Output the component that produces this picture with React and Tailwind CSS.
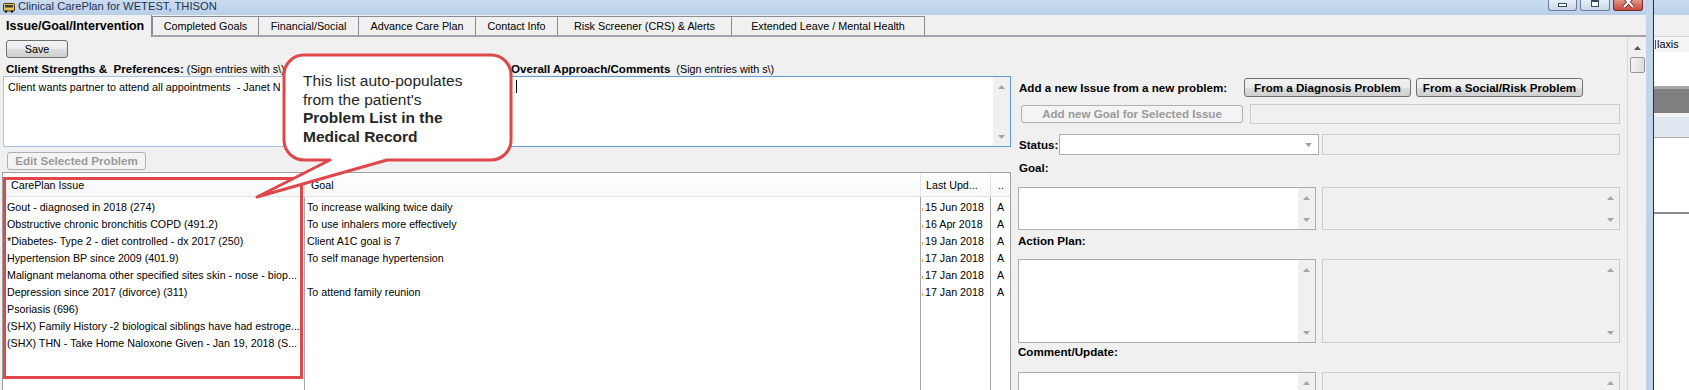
import React from "react";

const Up = ({ c = "#a5a5a5" }) => (
  <svg width="7" height="4" viewBox="0 0 7 4" className="block">
    <path d="M3.5 0L7 4H0Z" fill={c} />
  </svg>
);
const Down = ({ c = "#a5a5a5" }) => (
  <svg width="7" height="4" viewBox="0 0 7 4" className="block">
    <path d="M0 0H7L3.5 4Z" fill={c} />
  </svg>
);

function ScrollBox({ className = "", disabled = false, children }) {
  return (
    <div
      className={`flex overflow-hidden border ${
        disabled ? "bg-[#f0f0f0] border-[#cccccc]" : "bg-white border-[#abadb3]"
      } ${className}`}
    >
      <div className="flex-1 min-w-0">{children}</div>
      <div className="w-[17px] shrink-0 flex flex-col items-center justify-between pt-[8px] pb-[7px] bg-[#f0f0f0]">
        <Up />
        <Down />
      </div>
    </div>
  );
}

const BTN =
  "bg-[linear-gradient(to_bottom,#f2f2f2_0%,#ebebeb_50%,#dddddd_50%,#cfcfcf_100%)] border border-[#707070] rounded-[3px] flex items-center justify-center whitespace-nowrap";
const BTN_DIS =
  "bg-[#f4f4f4] border border-[#adb2b5] rounded-[3px] flex items-center justify-center whitespace-nowrap text-[#9a9a9a] font-bold text-[11.6px]";

const issues = [
  "Gout - diagnosed in 2018 (274)",
  "Obstructive chronic bronchitis COPD (491.2)",
  "*Diabetes- Type 2 - diet controlled - dx 2017 (250)",
  "Hypertension BP since 2009 (401.9)",
  "Malignant melanoma other specified sites skin - nose - biop...",
  "Depression since 2017 (divorce) (311)",
  "Psoriasis (696)",
  "(SHX) Family History -2 biological siblings have had estroge...",
  "(SHX) THN - Take Home Naloxone Given - Jan 19, 2018 (S...",
];
const goals = [
  "To increase walking twice daily",
  "To use inhalers more effectively",
  "Client A1C goal is 7",
  "To self manage hypertension",
  "",
  "To attend family reunion",
];
const dates = ["15 Jun 2018", "16 Apr 2018", "19 Jan 2018", "17 Jan 2018", "17 Jan 2018", "17 Jan 2018"];

const ROW = "h-[17px] leading-[17px] whitespace-nowrap overflow-hidden text-[10.7px]";
const HEAD =
  "h-[24px] leading-[24px] border-b border-r border-[#e3e3e3] bg-[linear-gradient(to_bottom,#ffffff,#f7f8fa)] whitespace-nowrap overflow-hidden text-[10.7px]";

function TitleBar() {
  return (
    <div className="h-[15px] flex items-start bg-[linear-gradient(to_bottom,#cbdcef,#b9cfe8)]">
      <svg width="12" height="12" viewBox="0 0 12 12" className="ml-[3px] mt-px shrink-0">
        <rect x="0.5" y="2.5" width="11" height="7.5" rx="1" fill="#e3c25a" stroke="#4a3b14" />
        <rect x="2" y="4" width="8" height="2.5" fill="#3b3b3b" />
        <circle cx="3" cy="10.5" r="1.3" fill="#222" />
        <circle cx="9" cy="10.5" r="1.3" fill="#222" />
      </svg>
      <span className="ml-[3px] text-[11.2px] leading-[12px] text-[#1e3250] whitespace-nowrap">
        Clinical CarePlan for WETEST, THISON
      </span>
      <div className="flex-1" />
      <div className="flex items-start gap-[3px] mr-[3px]">
        <div className="w-[29px] h-[11px] border border-t-0 border-[#6c7d96] rounded-b-[3px] bg-[linear-gradient(to_bottom,#e8eff8,#c8d7ec)] flex justify-center">
          <div className="mt-[3px] w-[9px] h-[4px] bg-white border border-[#3a4a60]" />
        </div>
        <div className="w-[30px] h-[11px] border border-t-0 border-[#6c7d96] rounded-b-[3px] bg-[linear-gradient(to_bottom,#e8eff8,#c8d7ec)] flex justify-center">
          <div className="w-[8px] h-[7px] bg-white border border-[#3a4a60] border-t-2" />
        </div>
        <div className="w-[30px] h-[11px] border border-t-0 border-[#7d2c24] rounded-b-[3px] bg-[linear-gradient(to_bottom,#e3958a,#c5493d)] flex justify-center">
          <svg width="13" height="8" viewBox="0 0 13 8">
            <path d="M2 -3L11 7M11 -3L2 7" stroke="#5a1a14" strokeWidth="3.6" />
            <path d="M2 -3L11 7M11 -3L2 7" stroke="#ffffff" strokeWidth="2.2" />
          </svg>
        </div>
      </div>
    </div>
  );
}

function Tabs() {
  const tabs = [
    ["Completed Goals", "w-[106px]"],
    ["Financial/Social", "w-[100px]"],
    ["Advance Care Plan", "w-[117px]"],
    ["Contact Info", "w-[82px]"],
    ["Risk Screener (CRS) & Alerts", "w-[174px]"],
    ["Extended Leave / Mental Health", "w-[194px] border-r"],
  ];
  return (
    <div className="h-[22px] flex">
      <div className="w-[152px] h-[22px] border-r border-[#898c95] flex items-center pl-[6px] font-bold text-[12.5px] whitespace-nowrap">
        Issue/Goal/Intervention
      </div>
      <div className="flex-1 h-[22px] flex items-end border-b-2 border-[#a0a3a8]">
        {tabs.map(([t, w]) => (
          <div
            key={t}
            className={`${w} h-[19px] border-l border-t border-[#898c95] flex items-center justify-center text-[10.8px] whitespace-nowrap`}
          >
            {t}
          </div>
        ))}
      </div>
    </div>
  );
}

function LeftPart() {
  return (
    <div className="w-[1011px] flex flex-col">
      <div className="h-[21px] pt-[3px] pl-[6px]">
        <div className={`${BTN} w-[62px] h-[18px] text-[10.8px]`}>Save</div>
      </div>
      <div className="h-[18px] pt-[2px] flex items-center whitespace-nowrap">
        <div className="w-[510px] pl-[6px] overflow-hidden">
          <span className="font-bold text-[11.6px]">Client Strengths &amp;&nbsp; Preferences:</span>
          <span className="text-[10.8px]"> (Sign entries with s\)</span>
        </div>
        <div className="pl-px">
          <span className="font-bold text-[11.6px]">Overall Approach/Comments</span>
          <span className="text-[10.8px]">&nbsp; (Sign entries with s\)</span>
        </div>
      </div>
      <div className="h-[71px] flex">
        <div className="ml-[3px] w-[506px] h-[71px] bg-white border border-[#a7c3e3] pl-[4px] pt-[3px] overflow-hidden">
          <div className="text-[10.8px] leading-[14px] whitespace-pre">
            Client wants partner to attend all appointments  - Janet N
          </div>
        </div>
        <ScrollBox className="ml-px w-[501px] h-[71px] !border-[#5f9ad6]">
          <div className="pl-[5px] pt-[3px]">
            <div className="w-px h-[13px] bg-black" />
          </div>
        </ScrollBox>
      </div>
      <div className="h-[25px] pt-[5px] pl-[7px]">
        <div className={`${BTN_DIS} w-[139px] h-[18px]`}>Edit Selected Problem</div>
      </div>
      <div className="flex-1 min-h-0 ml-[2px] border-l border-t border-r border-[#a0a0a0] bg-white flex">
        <div className="w-[302px] flex flex-col">
          <div className={`${HEAD} pl-[8px]`}>CarePlan Issue</div>
          <div className="flex-1 border-r border-[#a8a8a8] pt-[2px] pl-[4px]">
            {issues.map((t, i) => (
              <div key={i} className={ROW}>
                {t}
              </div>
            ))}
          </div>
        </div>
        <div className="w-[616px] flex flex-col">
          <div className={`${HEAD} pl-[6px]`}>Goal</div>
          <div className="flex-1 border-r border-[#a8a8a8] pt-[2px] pl-[2px]">
            {goals.map((t, i) => (
              <div key={i} className={ROW}>
                {t}
              </div>
            ))}
          </div>
        </div>
        <div className="w-[70px] flex flex-col">
          <div className={`${HEAD} pl-[5px]`}>Last Upd...</div>
          <div className="flex-1 border-r border-[#a8a8a8] pt-[2px] pl-[1px]">
            {dates.map((t, i) => (
              <div key={i} className={`${ROW} flex items-center`}>
                <span className="w-px h-[3px] bg-[#e9a94a] mr-[2px] mt-[4px] shrink-0" />
                <span>{t}</span>
              </div>
            ))}
          </div>
        </div>
        <div className="flex-1 flex flex-col">
          <div className={`${HEAD} pl-[7px] !border-r-0`}>..</div>
          <div className="flex-1 pt-[2px] pl-[6px]">
            {dates.map((t, i) => (
              <div key={i} className={ROW}>
                A
              </div>
            ))}
          </div>
        </div>
      </div>
    </div>
  );
}

function RightPart() {
  const LBL = "font-bold text-[11.6px] whitespace-nowrap";
  return (
    <div className="w-[616px] flex flex-col overflow-hidden">
      <div className="mt-[41px] h-[19px] flex items-center">
        <div className={`w-[233px] pl-[8px] ${LBL}`}>Add a new Issue from a new problem:</div>
        <div className={`${BTN} w-[167px] h-[19px] font-bold text-[11.6px]`}>From a Diagnosis Problem</div>
        <div className={`${BTN} ml-[5px] w-[167px] h-[19px] font-bold text-[11.6px]`}>From a Social/Risk Problem</div>
      </div>
      <div className="mt-[7px] h-[20px] flex items-center pl-[10px]">
        <div className={`${BTN_DIS} w-[222px] h-[18px]`}>Add new Goal for Selected Issue</div>
        <div className="ml-[7px] w-[370px] h-[20px] border border-[#cccccc] bg-[#f0f0f0]" />
      </div>
      <div className="mt-[10px] h-[21px] flex items-center pl-[8px]">
        <div className={`w-[40px] ${LBL}`}>Status:</div>
        <div className="w-[260px] h-[21px] bg-white border border-[#abadb3] flex items-center justify-end pr-[6px]">
          <Down c="#a0a0a0" />
        </div>
        <div className="ml-[3px] w-[298px] h-[21px] border border-[#cccccc] bg-[#f0f0f0]" />
      </div>
      <div className={`mt-[5px] h-[16px] leading-[16px] pl-[8px] ${LBL}`}>Goal:</div>
      <div className="mt-[11px] h-[43px] flex pl-[7px] gap-[6px]">
        <ScrollBox className="w-[298px] h-[43px]" />
        <ScrollBox className="w-[298px] h-[43px]" disabled />
      </div>
      <div className={`mt-[3px] h-[16px] leading-[16px] pl-[7px] ${LBL}`}>Action Plan:</div>
      <div className="mt-[10px] h-[84px] flex pl-[7px] gap-[6px]">
        <ScrollBox className="w-[298px] h-[84px]" />
        <ScrollBox className="w-[298px] h-[84px]" disabled />
      </div>
      <div className={`mt-px h-[16px] leading-[16px] pl-[7px] ${LBL}`}>Comment/Update:</div>
      <div className="mt-[12px] h-[60px] shrink-0 flex pl-[7px] gap-[6px]">
        <ScrollBox className="w-[298px] h-[60px]" />
        <ScrollBox className="w-[298px] h-[60px]" disabled />
      </div>
    </div>
  );
}

function MainScroll() {
  return (
    <div className="w-[19px] border-l border-[#d9d9d9] bg-[#f0f0f0] flex flex-col items-center pt-[9px]">
      <Up c="#555555" />
      <div className="mt-[7px] w-[15px] h-[16px] rounded-[2px] border border-[#979797] bg-[linear-gradient(to_right,#f4f4f4,#dcdcdc)]" />
    </div>
  );
}

function BackWindow() {
  return (
    <div className="w-[35px] flex flex-col overflow-hidden">
      <div className="h-[15px] bg-[linear-gradient(to_bottom,#cbdcef,#b9cfe8)]" />
      <div className="h-[22px] bg-[#f0f0f0] border-b border-[#d5d5d5]" />
      <div className="h-[15px] bg-[#f5f5f5] text-[10.8px] leading-[15px] whitespace-nowrap pl-px flex items-center">
        <span className="w-px h-[9px] bg-[#555] mr-px" />
        <span>laxis</span>
      </div>
      <div className="h-[34px] bg-white" />
      <div className="h-[3px] bg-[#a8a8a8]" />
      <div className="h-[24px] bg-[#808080]" />
      <div className="h-[4px] bg-[#f4f4f4]" />
      <div className="h-[20px] bg-[#dfe7f3]" />
      <div className="h-px bg-[#b0b0b0]" />
      <div className="h-[74px] bg-white" />
      <div className="h-[2px] bg-[#8a8a8a]" />
      <div className="flex-1 bg-white" />
    </div>
  );
}

export default function App() {
  return (
    <div className="w-[1689px] h-[390px] overflow-hidden relative flex bg-[#f0f0f0] text-black font-['Liberation_Sans',Arial,sans-serif]">
      <div className="w-[1646px] flex flex-col">
        <TitleBar />
        <Tabs />
        <div className="h-[353px] flex">
          <LeftPart />
          <RightPart />
          <MainScroll />
        </div>
      </div>
      <div className="w-[7px] bg-[linear-gradient(to_bottom,#c3d6ec,#bcd1ea)]" />
      <div className="w-px bg-[#2e2e2e]" />
      <BackWindow />

      {/* annotation: red box */}
      <div className="absolute left-[3px] top-[177px] w-[300px] h-[202px] border-[3px] border-[#e0474a] pointer-events-none" />

      {/* annotation: callout */}
      <svg
        className="absolute left-[250px] top-[50px] pointer-events-none"
        width="270"
        height="155"
        viewBox="0 0 270 155"
      >
        <path
          d="M54 5H241A20 20 0 0 1 261 25V90A20 20 0 0 1 241 110H137L7 147L80 110H54A20 20 0 0 1 34 90V25A20 20 0 0 1 54 5Z"
          fill="#ffffff"
          stroke="#e0474a"
          strokeWidth="3"
          strokeLinejoin="round"
        />
      </svg>
      <div className="absolute left-[303px] top-[72px] text-[15.5px] leading-[18.7px] text-[#262626] whitespace-nowrap">
        <div>This list auto-populates</div>
        <div>from the patient's</div>
        <div className="font-bold">Problem List in the</div>
        <div className="font-bold">Medical Record</div>
      </div>
    </div>
  );
}
